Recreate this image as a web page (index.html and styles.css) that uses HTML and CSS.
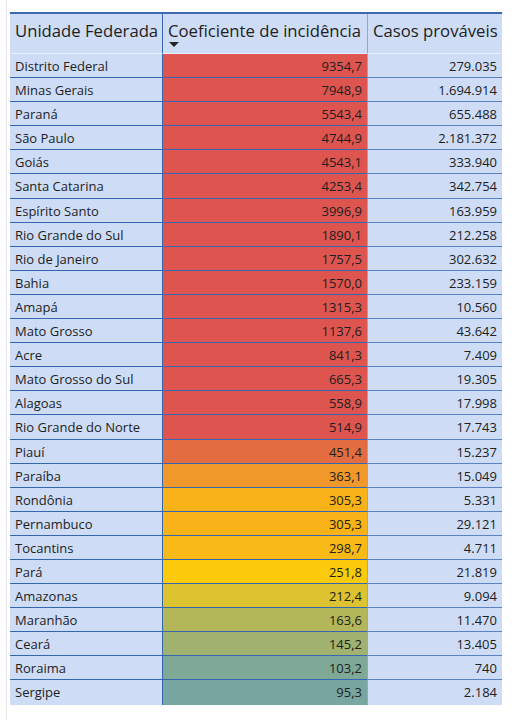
FILE: index.html
```html
<!DOCTYPE html>
<html lang="pt-BR">
<head>
<meta charset="utf-8">
<link rel="stylesheet" href="styles.css">
</head>
<body>
<div class="frame">
  <div class="grid">
    <div class="hcell c1">Unidade Federada</div>
    <div class="hcell c2"><span>Coeficiente de incidência</span><span class="sort"></span></div>
    <div class="hcell c3">Casos prováveis</div>

    <div class="cell c1">Distrito Federal</div><div class="cell c2 num" style="background:#de5550">9354,7</div><div class="cell c3 num">279.035</div>
    <div class="cell c1">Minas Gerais</div><div class="cell c2 num" style="background:#de5550">7948,9</div><div class="cell c3 num">1.694.914</div>
    <div class="cell c1">Paraná</div><div class="cell c2 num" style="background:#de5550">5543,4</div><div class="cell c3 num">655.488</div>
    <div class="cell c1">São Paulo</div><div class="cell c2 num" style="background:#de5550">4744,9</div><div class="cell c3 num">2.181.372</div>
    <div class="cell c1">Goiás</div><div class="cell c2 num" style="background:#de5550">4543,1</div><div class="cell c3 num">333.940</div>
    <div class="cell c1">Santa Catarina</div><div class="cell c2 num" style="background:#de5550">4253,4</div><div class="cell c3 num">342.754</div>
    <div class="cell c1">Espírito Santo</div><div class="cell c2 num" style="background:#de5550">3996,9</div><div class="cell c3 num">163.959</div>
    <div class="cell c1">Rio Grande do Sul</div><div class="cell c2 num" style="background:#de5550">1890,1</div><div class="cell c3 num">212.258</div>
    <div class="cell c1">Rio de Janeiro</div><div class="cell c2 num" style="background:#de5550">1757,5</div><div class="cell c3 num">302.632</div>
    <div class="cell c1">Bahia</div><div class="cell c2 num" style="background:#de5550">1570,0</div><div class="cell c3 num">233.159</div>
    <div class="cell c1">Amapá</div><div class="cell c2 num" style="background:#de5550">1315,3</div><div class="cell c3 num">10.560</div>
    <div class="cell c1">Mato Grosso</div><div class="cell c2 num" style="background:#de5550">1137,6</div><div class="cell c3 num">43.642</div>
    <div class="cell c1">Acre</div><div class="cell c2 num" style="background:#de5550">841,3</div><div class="cell c3 num">7.409</div>
    <div class="cell c1">Mato Grosso do Sul</div><div class="cell c2 num" style="background:#de5550">665,3</div><div class="cell c3 num">19.305</div>
    <div class="cell c1">Alagoas</div><div class="cell c2 num" style="background:#de5550">558,9</div><div class="cell c3 num">17.998</div>
    <div class="cell c1">Rio Grande do Norte</div><div class="cell c2 num" style="background:#de5550">514,9</div><div class="cell c3 num">17.743</div>
    <div class="cell c1">Piauí</div><div class="cell c2 num" style="background:#e36c41">451,4</div><div class="cell c3 num">15.237</div>
    <div class="cell c1">Paraíba</div><div class="cell c2 num" style="background:#f0982a">363,1</div><div class="cell c3 num">15.049</div>
    <div class="cell c1">Rondônia</div><div class="cell c2 num" style="background:#f9b218">305,3</div><div class="cell c3 num">5.331</div>
    <div class="cell c1">Pernambuco</div><div class="cell c2 num" style="background:#f9b218">305,3</div><div class="cell c3 num">29.121</div>
    <div class="cell c1">Tocantins</div><div class="cell c2 num" style="background:#f9b916">298,7</div><div class="cell c3 num">4.711</div>
    <div class="cell c1">Pará</div><div class="cell c2 num" style="background:#fbcb0b">251,8</div><div class="cell c3 num">21.819</div>
    <div class="cell c1">Amazonas</div><div class="cell c2 num" style="background:#dcc32f">212,4</div><div class="cell c3 num">9.094</div>
    <div class="cell c1">Maranhão</div><div class="cell c2 num" style="background:#b4b759">163,6</div><div class="cell c3 num">11.470</div>
    <div class="cell c1">Ceará</div><div class="cell c2 num" style="background:#a1b16f">145,2</div><div class="cell c3 num">13.405</div>
    <div class="cell c1">Roraima</div><div class="cell c2 num" style="background:#7ea997">103,2</div><div class="cell c3 num">740</div>
    <div class="cell c1 last">Sergipe</div><div class="cell c2 num last" style="background:#78a6a1">95,3</div><div class="cell c3 num last">2.184</div>
  </div>
</div>
</body>
</html>
```

FILE: styles.css
```css
html, body {
  margin: 0;
  padding: 0;
  background: #ffffff;
}
body {
  font-family: "Open Sans", "Noto Sans", sans-serif;
  color: #201f1e;
}
.frame {
  margin-left: 6px;
  border-left: 1px solid #e6e6e6;
  height: 720px;
  box-sizing: border-box;
  padding: 12px 0 0 3px;
}
.grid {
  width: 492px;
  display: grid;
  grid-template-columns: 153px 205px 134px;
  border-top: 2px solid #3e68b0;
}
.hcell {
  background: #cfdcf6;
  font-size: 16.7px;
  height: 40px;
  box-sizing: border-box;
  padding: 7px 0 0 5px;
  border-bottom: 1px solid #e7eefb;
  line-height: 20px;
  white-space: nowrap;
}
.hcell.c1 { border-right: 1px solid #3566b2; }
.hcell.c2 { border-right: 1px solid #8ea7d4; display: flex; flex-direction: column; }
.sort {
  width: 0;
  height: 0;
  margin: 1px 0 0 1px;
  border-left: 5px solid transparent;
  border-right: 5px solid transparent;
  border-top: 5px solid #252423;
}
.cell {
  background: #cfdcf6;
  font-size: 13px;
  height: 24.1px;
  box-sizing: border-box;
  border-bottom: 1px solid #3566b2;
  padding: 2px 5px 0;
  line-height: 21px;
  white-space: nowrap;
}
.cell.c1 { border-right: 1px solid #3566b2; }
.cell.c2 { border-right: 1px solid #8ea7d4; }
.cell.c3 { border-bottom-color: #5a82c4; }
.cell.last { border-bottom: none; }
.num { text-align: right; }
```
